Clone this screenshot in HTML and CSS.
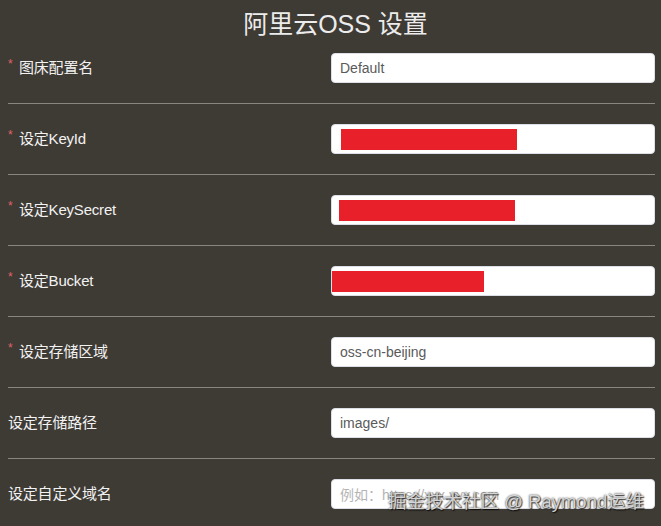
FILE: index.html
```html
<!DOCTYPE html>
<html lang="zh-CN">
<head>
<meta charset="utf-8">
<title>阿里云OSS 设置</title>
<link rel="stylesheet" href="styles.css">
</head>
<body>
<div class="panel">
  <h1 class="title">阿里云OSS 设置</h1>
  <div class="row">
    <label class="label"><span class="req">*</span>图床配置名</label>
    <div class="input"><span class="value">Default</span></div>
  </div>
  <div class="row">
    <label class="label"><span class="req">*</span>设定KeyId</label>
    <div class="input"><span class="mask mask-1"></span></div>
  </div>
  <div class="row">
    <label class="label"><span class="req">*</span>设定KeySecret</label>
    <div class="input"><span class="mask mask-2"></span></div>
  </div>
  <div class="row">
    <label class="label"><span class="req">*</span>设定Bucket</label>
    <div class="input"><span class="mask mask-3"></span></div>
  </div>
  <div class="row">
    <label class="label"><span class="req">*</span>设定存储区域</label>
    <div class="input"><span class="value">oss-cn-beijing</span></div>
  </div>
  <div class="row">
    <label class="label">设定存储路径</label>
    <div class="input"><span class="value">images/</span></div>
  </div>
  <div class="row last">
    <label class="label">设定自定义域名</label>
    <div class="input"><span class="placeholder">例如：https://xxx.yyy.com</span></div>
  </div>
  <div class="watermark">掘金技术社区 @ Raymond运维</div>
</div>
</body>
</html>
```
FILE: styles.css
```css
html, body {
  margin: 0;
  padding: 0;
  background: #3e3a34;
}
body {
  font-family: "Liberation Sans", Arial, "Noto Sans CJK SC", sans-serif;
  color: #f0f0f0;
  overflow: hidden;
  height: 526px;
}
.panel {
  position: relative;
  margin: 0 6px 0 8px;
  height: 526px;
}
.title {
  margin: 0;
  height: 33px;
  padding: 8px 0 0 8px;
  box-sizing: border-box;
  text-align: center;
  font-size: 25px;
  line-height: 33px;
  font-weight: normal;
  color: #ececec;
}
.row {
  display: flex;
  align-items: center;
  justify-content: space-between;
  padding: 20px 0;
  border-bottom: 1px solid #8a857d;
}
.row.last {
  border-bottom: none;
}
.label {
  font-size: 15px;
  color: #f2f2f2;
  display: flex;
  align-items: center;
  letter-spacing: -0.2px;
  margin-bottom: 4px;
}
.req {
  color: #e0626a;
  font-size: 12px;
  width: 11px;
  position: relative;
  top: -2px;
}
.input {
  width: 324px;
  height: 30px;
  box-sizing: border-box;
  background: #ffffff;
  border: 1px solid #dcdfe6;
  border-radius: 4px;
  display: flex;
  align-items: center;
  padding-left: 8px;
  overflow: hidden;
  white-space: nowrap;
}
.value {
  font-size: 14px;
  color: #5a5a5a;
}
.placeholder {
  font-size: 14px;
  color: #b4b4b4;
}
.mask {
  display: block;
  height: 21px;
  background: #e8202a;
}
.mask-1 { width: 176px; margin-left: 1px; }
.mask-2 { width: 176px; margin-left: -1px; }
.mask-3 { width: 152px; margin-left: -8px; }
.watermark {
  position: absolute;
  left: 380px;
  top: 487px;
  font-size: 18.5px;
  color: rgba(225, 225, 225, 0.92);
  text-shadow: 0 0 2px rgba(0,0,0,0.85), 1px 1px 1px rgba(0,0,0,0.7);
  white-space: nowrap;
}
```
